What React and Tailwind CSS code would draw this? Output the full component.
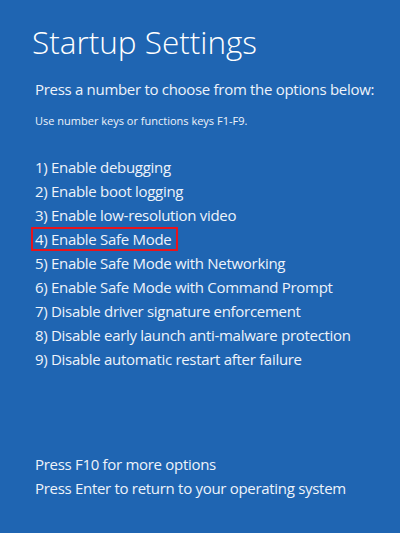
export default function App() {
  const options = [
    'Enable debugging',
    'Enable boot logging',
    'Enable low-resolution video',
    'Enable Safe Mode',
    'Enable Safe Mode with Networking',
    'Enable Safe Mode with Command Prompt',
    'Disable driver signature enforcement',
    'Disable early launch anti-malware protection',
    'Disable automatic restart after failure',
  ]
  return (
    <div className="w-[400px] h-[533px] bg-[#1f65b2] text-[#eef3fa] overflow-hidden" style={{ fontFamily: '"Open Sans", "Noto Sans", sans-serif' }}>
      <div className="pl-[35px] pt-[20px]">
        <h1 className="-ml-[3px] text-[31.5px] leading-[44px] font-light text-white">Startup Settings</h1>
        <p className="mt-[14px] text-[15px] leading-[22px] tracking-[-0.3px]">Press a number to choose from the options below:</p>
        <p className="mt-[13px] text-[11px] leading-[16px]">Use number keys or functions keys F1-F9.</p>
        <ul className="mt-[26px] text-[15px] tracking-[-0.3px]">
          {options.map((o, i) => (
            <li key={i} className="h-[24px] flex items-center">
              {i === 3 ? (
                <span className="-ml-[4px] pl-[2px] pr-[5px] h-[24px] flex items-center border-2 border-[#e8141c]">{i + 1}) {o}</span>
              ) : (
                <span>{i + 1}) {o}</span>
              )}
            </li>
          ))}
        </ul>
        <div className="mt-[81px] text-[15px] tracking-[-0.3px]">
          <p className="h-[24px] flex items-center">Press F10 for more options</p>
          <p className="h-[24px] flex items-center">Press Enter to return to your operating system</p>
        </div>
      </div>
    </div>
  )
}
